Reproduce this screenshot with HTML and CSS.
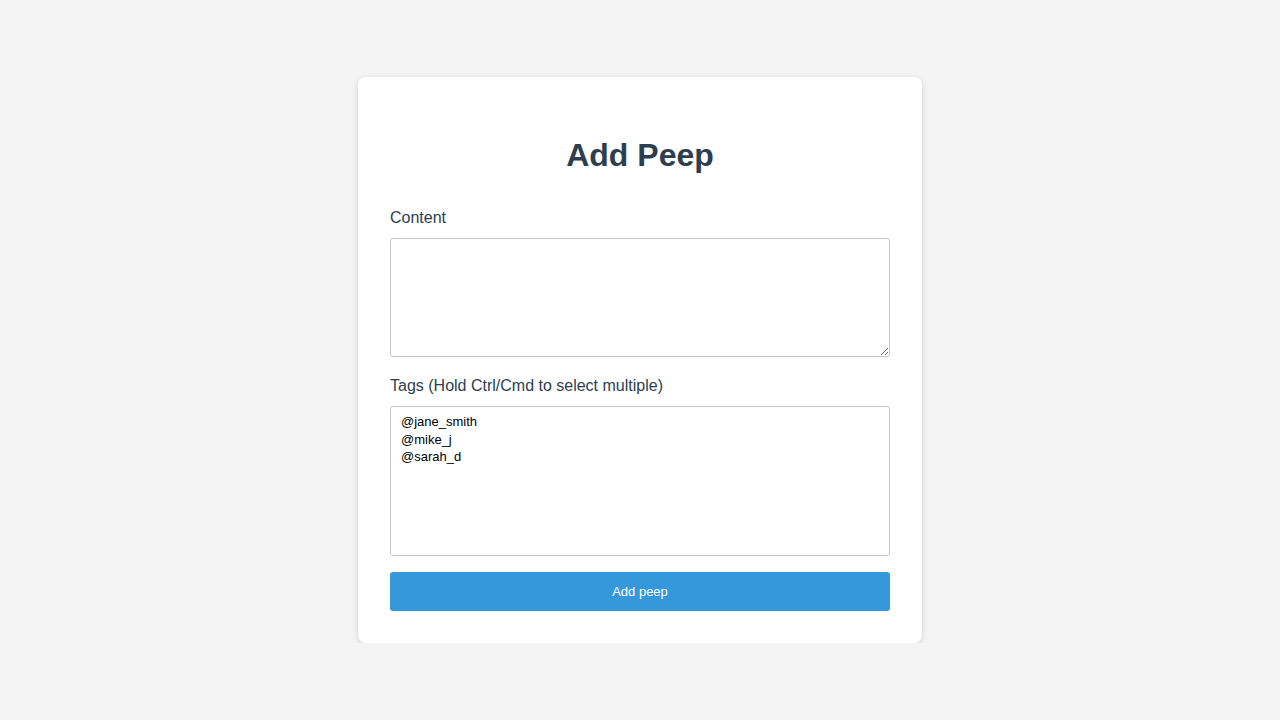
FILE: index.html
```html
<!DOCTYPE html>
<html lang="en">
<head>
<meta charset="utf-8">
<title>Add Peep</title>
<link rel="stylesheet" href="styles.css">
</head>
<body>
<main class="page">
  <form class="card">
    <h1 class="title">Add Peep</h1>
    <div class="group">
      <label class="label" for="content">Content</label>
      <textarea id="content" class="textarea"></textarea>
    </div>
    <div class="group">
      <label class="label" for="tags">Tags (Hold Ctrl/Cmd to select multiple)</label>
      <select id="tags" class="select" multiple>
        <option>@jane_smith</option>
        <option>@mike_j</option>
        <option>@sarah_d</option>
      </select>
    </div>
    <button type="button" class="btn">Add peep</button>
  </form>
</main>
</body>
</html>
```
FILE: styles.css
```css
html, body {
  margin: 0;
  padding: 0;
}
body {
  background: #f4f4f4;
  font-family: "Liberation Sans", Arial, sans-serif;
  color: #2c3e50;
}
.page {
  display: flex;
  justify-content: center;
  padding-top: 77px;
}
.card {
  box-sizing: border-box;
  width: 564px;
  background: #fff;
  border-radius: 8px;
  box-shadow: 0 2px 6px rgba(0, 0, 0, 0.15);
  padding: 32px;
  display: flex;
  flex-direction: column;
}
.title {
  margin: 28px 0 32px;
  font-size: 32px;
  font-weight: bold;
  line-height: 37px;
  text-align: center;
  color: #2c3e50;
}
.group {
  display: flex;
  flex-direction: column;
  margin-bottom: 16px;
}
.label {
  font-size: 16px;
  line-height: 24px;
  margin-bottom: 8px;
  color: #2c3e50;
}
.textarea {
  box-sizing: border-box;
  width: 500px;
  height: 119px;
  margin: 0;
  border: 1px solid #c4c8cc;
  border-radius: 3px;
  padding: 6px 10px;
  font-family: "Liberation Sans", Arial, sans-serif;
  font-size: 13px;
  resize: vertical;
  background: #fff;
}
.group + .group {
  margin-top: 1px;
}
.select {
  box-sizing: border-box;
  width: 500px;
  height: 150px;
  margin: 0;
  border: 1px solid #c4c8cc;
  border-radius: 3px;
  padding: 6px 10px;
  font-family: "Liberation Sans", Arial, sans-serif;
  font-size: 13px;
  color: #000;
  background: #fff;
  outline: none;
}
.select option {
  padding: 1px 0;
}
.btn {
  box-sizing: border-box;
  width: 500px;
  height: 39px;
  border: 0;
  border-radius: 3px;
  background: #3498db;
  color: #fff;
  font-family: "Liberation Sans", Arial, sans-serif;
  font-size: 13px;
  cursor: pointer;
}
```
